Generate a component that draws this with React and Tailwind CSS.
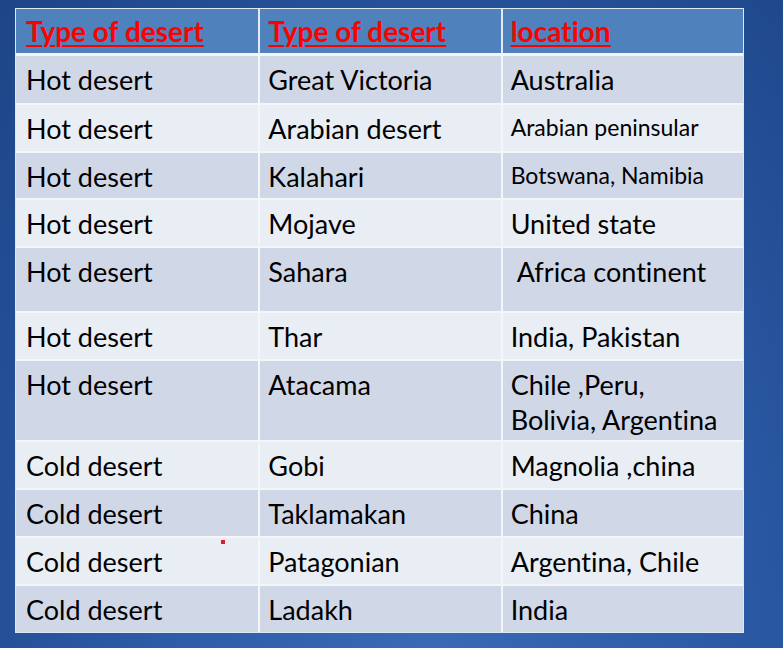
import React from "react";

const rows = [
  { a: "Hot desert", b: "Great Victoria", c: "Australia", h: 48 },
  { a: "Hot desert", b: "Arabian desert", c: "Arabian peninsular", h: 48, small: true },
  { a: "Hot desert", b: "Kalahari", c: "Botswana, Namibia", h: 47, small: true },
  { a: "Hot desert", b: "Mojave", c: "United state", h: 48 },
  { a: "Hot desert", b: "Sahara", c: "\u00a0Africa continent", h: 65 },
  { a: "Hot desert", b: "Thar", c: "India, Pakistan", h: 48 },
  { a: "Hot desert", b: "Atacama", c: "Chile ,Peru,\nBolivia, Argentina", h: 81 },
  { a: "Cold desert", b: "Gobi", c: "Magnolia ,china", h: 48 },
  { a: "Cold desert", b: "Taklamakan", c: "China", h: 48 },
  { a: "Cold desert", b: "Patagonian", c: "Argentina, Chile", h: 48, mark: true },
  { a: "Cold desert", b: "Ladakh", c: "India", h: 48 },
];

export default function App() {
  return (
    <div
      className="w-[783px] h-[648px] overflow-hidden bg-[radial-gradient(ellipse_at_55%_100%,#3a69b6_0%,#2c5ba7_45%,#1d4587_100%)] [font-variant-ligatures:none]"
      style={{ fontFamily: "Lato, 'Open Sans', sans-serif" }}
    >
      <div className="pt-[8px] pl-[15px]">
        <div className="w-[729px] border border-[#dfe7f3] flex flex-col">
          <div className="grid grid-cols-3 h-[47px] bg-[#4f81bd] border-b-[3px] border-[#f2f5fa]">
            {["Type of desert", "Type of desert", "location"].map((t, i) => (
              <div
                key={i}
                className={`pt-[5px] text-[28px] leading-[34px] font-bold text-[#ff0000] underline decoration-2 underline-offset-[3px] ${i > 0 ? "pl-[8px] border-l-2 border-[#e3eaf5]" : "pl-[10px]"}`}
              >
                {t}
              </div>
            ))}
          </div>
          {rows.map((r, i) => (
            <div
              key={i}
              className={`relative grid grid-cols-3 text-black ${i % 2 === 0 ? "bg-[#d0d8e8]" : "bg-[#e9edf4]"} ${i > 0 ? "border-t-2 border-[#f4f6fa]" : ""}`}
              style={{ height: r.h - (i > 0 ? 0 : 1) }}
            >
              <div className="pl-[10px] pt-[6px] text-[27px] leading-[35px]">{r.a}</div>
              <div className="pl-[8px] pt-[6px] text-[27px] leading-[35px] border-l-2 border-[#f4f6fa]">{r.b}</div>
              <div
                className={`pl-[8px] border-l-2 border-[#f4f6fa] whitespace-pre-line ${r.small ? "pt-[7px] text-[23px] leading-[30px]" : "pt-[6px] text-[27px] leading-[35px]"}`}
              >
                {r.c}
              </div>
              {r.mark && (
                <span className="absolute left-[205px] top-[2px] w-[4px] h-[4px] bg-[#e01c1c]" />
              )}
            </div>
          ))}
        </div>
      </div>
    </div>
  );
}
